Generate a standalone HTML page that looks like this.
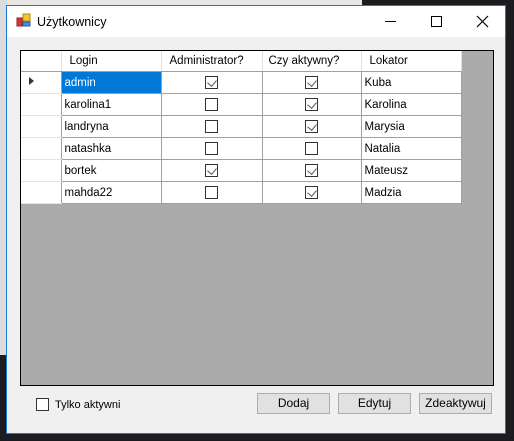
<!DOCTYPE html>
<html><head><meta charset="utf-8"><style>
*{margin:0;padding:0;box-sizing:border-box}
body{width:514px;height:441px;background:#1c1c20;position:relative;overflow:hidden;font-family:"Liberation Sans",sans-serif;font-size:12px;color:#000}
.bgl{position:absolute;left:0;top:0;width:362px;height:6px;background:#e6e6e6}
.bgs{position:absolute;left:0;top:0;width:7px;height:355px;background:#dcdcdc}
.win{position:absolute;left:6px;top:5px;width:500px;height:429px;border:1px solid #1979d6;background:#f0f0f0}
.title{position:absolute;left:0;top:0;width:498px;height:31px;background:#fff}
.title .t{position:absolute;left:30px;top:9px;font-size:12.5px}
.grid{position:absolute;left:13px;top:44px;width:474px;height:336px;border:1px solid #000;background:#ababab}
table{border-collapse:collapse;position:absolute;left:0;top:0}
td{border:1px solid #a0a0a0;background:#fff;height:22px;padding:1px 0 0 3px;font-size:11.5px;white-space:nowrap}
tr.h td{height:20px;border-top:none;border-color:#d8d8d8 #e0e0e0 #a0a0a0 #e0e0e0}
td.rh{border-left:none;width:40px;border-color:#e4e4e4;border-right:1px solid #a0a0a0}
td.c{text-align:center;padding:0}
.cb{display:inline-block;width:13px;height:13px;border:1px solid #333;background:#fff;vertical-align:middle;position:relative}
.cb.k::after{content:"";position:absolute;left:3px;top:1px;width:5px;height:7px;border:solid #555;border-width:0 1px 1px 0;transform:rotate(40deg)}
.sel{background:#0078d7;color:#fff}
.btn{position:absolute;top:387px;height:21px;border:1px solid #adadad;background:#e1e1e1;text-align:center;line-height:19px;font-size:12px}
</style></head><body>
<div class="bgl"></div><div class="bgs"></div>
<div class="win">
 <div class="title">
  <svg style="position:absolute;left:9px;top:7px" width="16" height="14"><rect x="7" y="1" width="7" height="7" fill="#f5c52a" stroke="#b08a10"/><rect x="1" y="5" width="5" height="8" fill="#d33" stroke="#922"/><rect x="7" y="9" width="7" height="4" fill="#4a8ee0" stroke="#2a5ea0"/></svg>
  <span class="t">Użytkownicy</span>
  <div style="position:absolute;left:378px;top:15px;width:11px;height:1px;background:#000"></div>
  <div style="position:absolute;left:424px;top:10px;width:11px;height:11px;border:1px solid #000"></div>
  <svg style="position:absolute;left:469px;top:9px" width="13" height="13"><path d="M1 1L12 12M12 1L1 12" stroke="#000" stroke-width="1.2"/></svg>
 </div>
 <div class="grid">
  <table>
   <tr class="h"><td class="rh"></td><td style="width:100px;padding-left:8px">Login</td><td style="width:101px;padding-left:8px">Administrator?</td><td style="width:99px;padding-left:6px">Czy aktywny?</td><td style="width:100px;padding-left:8px">Lokator</td></tr>
   <tr><td class="rh"><svg width="8" height="10" style="margin-left:4px"><path d="M1 1L6 5L1 9Z" fill="#333"/></svg></td><td class="sel">admin</td><td class="c"><span class="cb k"></span></td><td class="c"><span class="cb k"></span></td><td>Kuba</td></tr>
   <tr><td class="rh"></td><td>karolina1</td><td class="c"><span class="cb"></span></td><td class="c"><span class="cb k"></span></td><td>Karolina</td></tr>
   <tr><td class="rh"></td><td>landryna</td><td class="c"><span class="cb"></span></td><td class="c"><span class="cb k"></span></td><td>Marysia</td></tr>
   <tr><td class="rh"></td><td>natashka</td><td class="c"><span class="cb"></span></td><td class="c"><span class="cb"></span></td><td>Natalia</td></tr>
   <tr><td class="rh"></td><td>bortek</td><td class="c"><span class="cb k"></span></td><td class="c"><span class="cb k"></span></td><td>Mateusz</td></tr>
   <tr><td class="rh"></td><td>mahda22</td><td class="c"><span class="cb"></span></td><td class="c"><span class="cb k"></span></td><td>Madzia</td></tr>
  </table>
 </div>
 <span class="cb" style="position:absolute;left:29px;top:392px"></span>
 <span style="position:absolute;left:48px;top:393px;font-size:11px">Tylko aktywni</span>
 <div class="btn" style="left:250px;width:73px">Dodaj</div>
 <div class="btn" style="left:331px;width:73px">Edytuj</div>
 <div class="btn" style="left:412px;width:73px">Zdeaktywuj</div>
</div>
</body></html>
